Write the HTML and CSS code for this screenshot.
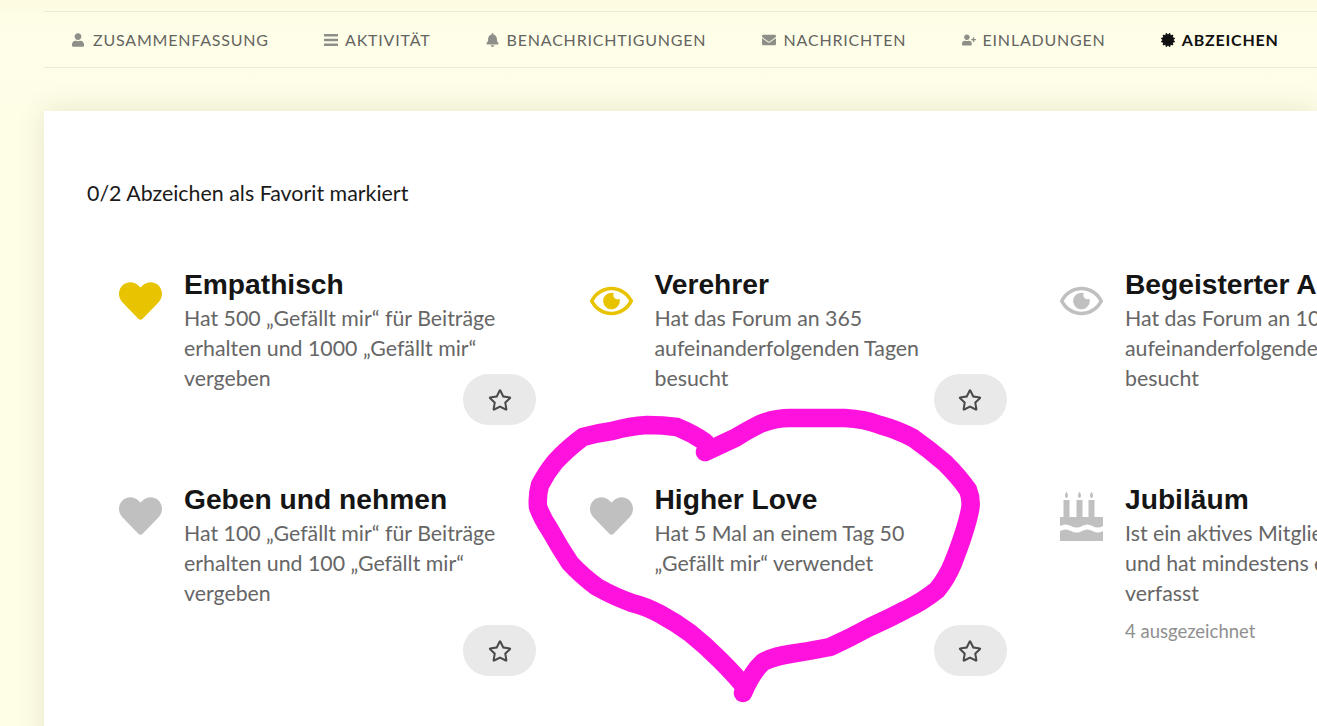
FILE: index.html
```html
<!DOCTYPE html>
<html lang="de">
<head>
<meta charset="utf-8">
<title>Abzeichen</title>
<link rel="stylesheet" href="styles.css">
</head>
<body>
<svg class="defs" width="0" height="0" aria-hidden="true">
  <defs>
    <symbol id="i-user" viewBox="0 0 448 512"><path d="M224 256c70.7 0 128-57.3 128-128S294.7 0 224 0 96 57.3 96 128s57.3 128 128 128zm89.6 32h-16.7c-22.2 10.2-46.9 16-72.9 16s-50.6-5.8-72.9-16h-16.7C60.2 288 0 348.2 0 422.4V464c0 26.5 21.5 48 48 48h352c26.5 0 48-21.5 48-48v-41.6c0-74.2-60.2-134.4-134.4-134.4z"/></symbol>
    <symbol id="i-bars" viewBox="0 0 14 12"><path d="M0 0h14v2.4H0zM0 4.8h14v2.4H0zM0 9.6h14V12H0z"/></symbol>
    <symbol id="i-bell" viewBox="0 0 448 512"><path d="M224 512c35.32 0 63.97-28.65 63.97-64H160.03c0 35.35 28.65 64 63.97 64zm215.39-149.71c-19.32-20.76-55.47-51.99-55.47-154.29 0-77.7-54.48-139.9-127.94-155.16V32c0-17.67-14.32-32-31.98-32s-31.98 14.33-31.98 32v20.84C118.56 68.1 64.08 130.3 64.08 208c0 102.3-36.15 133.53-55.47 154.29-6 6.45-8.66 14.16-8.61 21.71.11 16.4 12.98 32 32.1 32h383.8c19.12 0 32-15.6 32.1-32 .05-7.55-2.61-15.27-8.61-21.71z"/></symbol>
    <symbol id="i-mail" viewBox="0 0 512 512"><path d="M502.3 190.8c3.9-3.1 9.7-.2 9.7 4.7V400c0 26.5-21.5 48-48 48H48c-26.5 0-48-21.5-48-48V195.6c0-5 5.7-7.8 9.7-4.7 22.4 17.4 52.1 39.5 154.1 113.6 21.1 15.4 56.7 47.8 92.2 47.6 35.7.3 72-32.8 92.3-47.6 102-74.1 131.6-96.3 154-113.7zM256 320c23.2.4 56.6-29.2 73.4-41.4 132.7-96.3 142.8-104.7 173.4-128.7 5.8-4.5 9.2-11.5 9.2-18.9v-19c0-26.5-21.5-48-48-48H48C21.5 64 0 85.5 0 112v19c0 7.4 3.4 14.3 9.2 18.9 30.6 23.9 40.7 32.4 173.4 128.7 16.8 12.2 50.2 41.8 73.4 41.4z"/></symbol>
    <symbol id="i-plus" viewBox="0 0 640 512"><path d="M624 208h-64v-64c0-8.8-7.2-16-16-16h-32c-8.8 0-16 7.2-16 16v64h-64c-8.8 0-16 7.2-16 16v32c0 8.8 7.2 16 16 16h64v64c0 8.8 7.2 16 16 16h32c8.8 0 16-7.2 16-16v-64h64c8.8 0 16-7.2 16-16v-32c0-8.8-7.2-16-16-16zm-400 48c70.7 0 128-57.3 128-128S294.7 0 224 0 96 57.3 96 128s57.3 128 128 128zm89.6 32h-16.7c-22.2 10.2-46.9 16-72.9 16s-50.6-5.8-72.9-16h-16.7C60.2 288 0 348.2 0 422.4V464c0 26.5 21.5 48 48 48h352c26.5 0 48-21.5 48-48v-41.6c0-74.2-60.2-134.4-134.4-134.4z"/></symbol>
    <symbol id="i-cert" viewBox="0 0 512 512"><path d="M458.622 255.92l45.985-45.005c13.708-12.977 7.316-36.039-10.664-40.339l-62.65-15.99 17.661-62.015c4.991-17.838-11.829-34.663-29.661-29.671l-61.994 17.667-15.984-62.671C337.085.197 313.765-6.276 300.99 7.228L256 53.57 211.011 7.229c-12.63-13.351-36.047-7.234-40.325 10.668l-15.984 62.671-61.995-17.667C74.87 57.907 58.056 74.738 63.046 92.572l17.661 62.015-62.65 15.99C.069 174.878-6.31 197.944 7.392 210.915l45.985 45.005-45.985 45.004c-13.708 12.977-7.316 36.039 10.664 40.339l62.65 15.99-17.661 62.015c-4.991 17.838 11.829 34.663 29.661 29.671l61.994-17.667 15.984 62.671c4.439 18.575 27.696 24.018 40.325 10.668L256 458.61l44.989 46.001c12.5 13.488 35.987 7.486 40.325-10.668l15.984-62.671 61.994 17.667c17.832 4.992 34.652-11.833 29.661-29.671l-17.661-62.015 62.65-15.99c17.98-4.3 24.371-27.362 10.664-40.339l-45.984-45.004z"/></symbol>
    <symbol id="i-heart" viewBox="0 0 512 512"><path d="M462.3 62.6C407.5 15.9 326 24.3 275.7 76.2L256 96.5l-19.7-20.3C186.1 24.3 104.5 15.9 49.7 62.6c-62.8 53.6-66.1 149.8-9.9 207.9l193.5 199.8c12.5 12.9 32.8 12.9 45.3 0l193.5-199.8c56.3-58.1 53-154.3-9.8-207.9z"/></symbol>
    <symbol id="i-eye" viewBox="0 0 576 512"><g transform="translate(576 0) scale(-1 1)"><path d="M288 144a110.94 110.94 0 0 0-31.24 5 55.4 55.4 0 0 1 7.24 27 56 56 0 0 1-56 56 55.4 55.4 0 0 1-27-7.24A111.71 111.71 0 1 0 288 144zm284.52 97.4C518.29 135.59 410.93 64 288 64S57.68 135.64 3.48 241.41a32.35 32.35 0 0 0 0 29.19C57.71 376.41 165.07 448 288 448s230.32-71.64 284.52-177.41a32.35 32.35 0 0 0 0-29.19zM288 400c-98.65 0-189.09-55-237.93-144C98.91 167 189.34 112 288 112s189.09 55 237.93 144C477.1 345 386.66 400 288 400z"/></g></symbol>
    <symbol id="i-star" viewBox="0 0 576 512"><path d="M528.1 171.5L382 150.2 316.7 17.8c-11.7-23.6-45.6-23.9-57.4 0L194 150.2 47.9 171.5c-26.2 3.8-36.7 36.1-17.7 54.6l105.7 103-25 145.5c-4.5 26.3 23.2 46 46.4 33.7L288 439.6l130.7 68.7c23.2 12.2 50.9-7.4 46.4-33.7l-25-145.5 105.7-103c19-18.5 8.5-50.8-17.7-54.6zM388.6 312.3l23.7 138.4L288 385.4l-124.3 65.3 23.7-138.4-100.6-98 139-20.2 62.2-126 62.2 126 139 20.2-100.6 98z"/></symbol>
    <symbol id="i-cake" viewBox="0 0 43 49"><path d="M5 3.500C5 2 6.200 0 6.500 0 6.800 0 8 2 8 3.500 8 5 7.300 6 6.500 6S5 5 5 3.500zM18 3.500C18 2 19.200 0 19.500 0 19.800 0 21 2 21 3.500 21 5 20.300 6 19.500 6S18 5 18 3.500zM30 3.500C30 2 31.200 0 31.500 0 31.800 0 33 2 33 3.500 33 5 32.300 6 31.500 6S30 5 30 3.500zM3.500 8h6v17h-6zM16.500 8h6v17h-6zM28.500 8h6v17h-6zM0 25h43v9c-3.500 2-7 2-10.500 0s-7-2-10.500 0-7.500 2-11 0-7.500-2-11 0zM0 39c3.500-2 7.500-2 11 0s7.500 2 11 0 7-2 10.500 0 7 2 10.500 0v10H0z"/></symbol>
  </defs>
</svg>

<div class="page">
  <nav class="tabs">
    <a class="tab"><svg class="tab-icon tab-user"><use href="#i-user"/></svg>Zusammenfassung</a>
    <a class="tab"><svg class="tab-icon tab-bars"><use href="#i-bars"/></svg>Aktivität</a>
    <a class="tab"><svg class="tab-icon tab-bell"><use href="#i-bell"/></svg>Benachrichtigungen</a>
    <a class="tab"><svg class="tab-icon tab-mail"><use href="#i-mail"/></svg>Nachrichten</a>
    <a class="tab"><svg class="tab-icon tab-plus"><use href="#i-plus"/></svg>Einladungen</a>
    <a class="tab tab-active"><svg class="tab-icon tab-cert"><use href="#i-cert"/></svg>Abzeichen</a>
  </nav>

  <main class="panel">
    <p class="fav-count">0/2 Abzeichen als Favorit markiert</p>
    <div class="badge-grid">
      <article class="badge">
        <svg class="badge-icon gold"><use href="#i-heart"/></svg>
        <div class="badge-body">
          <h3 class="badge-title">Empathisch</h3>
          <p class="badge-desc">Hat 500 „Gefällt mir“ für Beiträge erhalten und 1000 „Gefällt mir“ vergeben</p>
        </div>
        <button class="fav" type="button"><svg class="fav-star"><use href="#i-star"/></svg></button>
      </article>
      <article class="badge">
        <svg class="badge-icon gold"><use href="#i-eye"/></svg>
        <div class="badge-body">
          <h3 class="badge-title">Verehrer</h3>
          <p class="badge-desc">Hat das Forum an 365 aufeinanderfolgenden Tagen besucht</p>
        </div>
        <button class="fav" type="button"><svg class="fav-star"><use href="#i-star"/></svg></button>
      </article>
      <article class="badge">
        <svg class="badge-icon silver"><use href="#i-eye"/></svg>
        <div class="badge-body">
          <h3 class="badge-title">Begeisterter Anhänger</h3>
          <p class="badge-desc">Hat das Forum an 100 aufeinanderfolgenden Tagen besucht</p>
        </div>
        <button class="fav" type="button"><svg class="fav-star"><use href="#i-star"/></svg></button>
      </article>
      <article class="badge">
        <svg class="badge-icon silver"><use href="#i-heart"/></svg>
        <div class="badge-body">
          <h3 class="badge-title">Geben und nehmen</h3>
          <p class="badge-desc">Hat 100 „Gefällt mir“ für Beiträge erhalten und 100 „Gefällt mir“ vergeben</p>
        </div>
        <button class="fav" type="button"><svg class="fav-star"><use href="#i-star"/></svg></button>
      </article>
      <article class="badge">
        <svg class="badge-icon silver"><use href="#i-heart"/></svg>
        <div class="badge-body">
          <h3 class="badge-title">Higher Love</h3>
          <p class="badge-desc">Hat 5 Mal an einem Tag 50 „Gefällt mir“ verwendet</p>
        </div>
        <button class="fav" type="button"><svg class="fav-star"><use href="#i-star"/></svg></button>
      </article>
      <article class="badge">
        <svg class="badge-icon silver cake"><use href="#i-cake"/></svg>
        <div class="badge-body">
          <h3 class="badge-title">Jubiläum</h3>
          <p class="badge-desc">Ist ein aktives Mitglied seit 1 Jahr und hat mindestens einen Beitrag verfasst</p>
          <p class="badge-count">4 ausgezeichnet</p>
        </div>
        <button class="fav" type="button"><svg class="fav-star"><use href="#i-star"/></svg></button>
      </article>
    </div>
  </main>

  <svg class="scribble" viewBox="0 0 1317 726" aria-hidden="true">
    <path d="M705 452 L735 438 Q748 430 760 424 Q775 418 790 418 L845 418 Q865 419 880 425 Q898 430 913 438 Q930 450 945 463 Q960 478 968 490 Q972 500 970 510 Q966 530 953 563 Q947 578 937 590 Q922 602 905 610 Q888 619 870 627 Q850 638 830 647 Q810 651 790 654 Q775 656 763 662 Q752 672 743 693 M743 685 Q735 675 720 660 Q705 645 690 633 Q675 622 660 614 Q645 606 632 603 Q615 597 597 587 Q582 576 570 563 Q560 548 550 530 Q542 518 538 507 Q537 495 540 485 Q546 473 555 462 Q568 448 583 437 Q597 433 612 431 Q630 426 647 425 Q663 425 677 427 Q692 433 705 442"/>
  </svg>
</div>
</body>
</html>
```

FILE: styles.css
```css
* {
  box-sizing: border-box;
}

html,
body {
  margin: 0;
  height: 100%;
  overflow: hidden;
}

body {
  background: #fffee8;
  font-family: Lato, "Liberation Sans", sans-serif;
  color: #111;
  text-rendering: optimizeLegibility;
}

.defs {
  display: block;
  height: 0;
}

.page {
  position: relative;
  width: 1317px;
  height: 726px;
  overflow: hidden;
  padding: 11px 0 0 44px;
  background: linear-gradient(180deg, #fdfce2 0, #fffee9 40px, #fefde6 110px);
}

.tabs {
  display: flex;
  align-items: center;
  gap: 55.2px;
  height: 57px;
  padding-left: 28px;
  border-top: 1px solid #ecebd8;
  border-bottom: 1px solid #ecebd8;
}

.tab {
  display: flex;
  align-items: center;
  font-size: 16px;
  letter-spacing: 0.8px;
  text-transform: uppercase;
  color: #646460;
  white-space: nowrap;
}

.tab-active {
  color: #111;
  font-weight: 700;
}

.tab-icon {
  display: block;
  fill: #8f8f8a;
}

.tab-active .tab-icon {
  fill: #111;
}

.tab-user {
  width: 12px;
  height: 14px;
  margin-right: 9px;
}

.tab-bars {
  width: 14px;
  height: 12px;
  margin-right: 7px;
}

.tab-bell {
  width: 13px;
  height: 14px;
  margin-right: 8px;
}

.tab-mail {
  width: 14px;
  height: 14px;
  margin-right: 8px;
}

.tab-plus {
  width: 14px;
  height: 12px;
  margin-right: 7px;
}

.tab-cert {
  width: 14px;
  height: 14px;
  margin-right: 7px;
}

.panel {
  height: 700px;
  margin-top: 43px;
  padding: 70px 0 0 43px;
  background: #fff;
  box-shadow: 0 0 28px rgba(70, 60, 10, 0.12);
}

.fav-count {
  margin: 0;
  font-size: 21.4px;
  line-height: 24px;
  color: #1a1a1a;
}

.badge-grid {
  display: grid;
  grid-template-columns: repeat(3, 470.5px);
  row-gap: 56px;
  margin-top: 61px;
}

.badge {
  position: relative;
  display: flex;
  align-items: flex-start;
  padding: 0 0 32px 32px;
}

.badge-icon {
  flex: none;
  display: block;
  width: 43px;
  height: 44px;
  margin-top: 13px;
  margin-right: 22px;
}

.badge-icon.cake {
  height: 49px;
  margin-top: 11px;
}

.gold {
  fill: #e7c300;
}

.silver {
  fill: #c0c0c0;
}

.badge-body {
  width: 318px;
}

.badge-title {
  margin: 0 0 1px;
  font-family: "Liberation Sans", Arial, sans-serif;
  font-size: 28.2px;
  font-weight: 700;
  line-height: 36px;
  color: #151515;
  white-space: nowrap;
}

.badge-desc {
  margin: 0;
  font-size: 21.34px;
  line-height: 30px;
  color: #666;
}

.badge-count {
  margin: 10px 0 0;
  font-size: 18.5px;
  line-height: 26px;
  color: #8f8f8f;
}

.fav {
  position: absolute;
  right: 21.5px;
  bottom: 0;
  display: flex;
  align-items: center;
  justify-content: center;
  width: 73px;
  height: 51px;
  padding: 0;
  border: 0;
  border-radius: 26px;
  background: #e9e9e9;
}

.fav-star {
  display: block;
  width: 24px;
  height: 22px;
  fill: #4a4a4a;
}

.scribble {
  position: absolute;
  inset: 0;
  width: 1317px;
  height: 726px;
  fill: none;
  stroke: #ff12dd;
  stroke-width: 18.5;
  stroke-linecap: round;
  stroke-linejoin: round;
  pointer-events: none;
}
```
